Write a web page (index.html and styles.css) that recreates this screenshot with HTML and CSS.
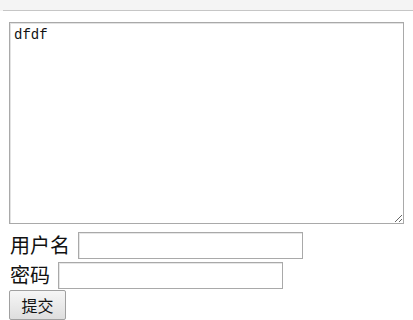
FILE: index.html
```html
<!DOCTYPE html>
<html lang="zh-CN">
<head>
  <meta charset="UTF-8">
  <title>提交</title>
  <link rel="stylesheet" href="styles.css">
</head>
<body>
  <div class="topbar"><div class="topbar-line"></div></div>
  <form class="login-form" action="#" method="post">
    <textarea class="note" name="content">dfdf</textarea>
    <div class="row">
      <label>用户名</label><input type="text" class="field" name="username">
    </div>
    <div class="row">
      <label>密码</label><input type="password" class="field" name="password">
    </div>
    <button type="submit" class="submit-btn">提交</button>
  </form>
</body>
</html>
```

FILE: styles.css
```css
body {
  margin: 0;
  background: #fff;
  font-family: "Noto Sans CJK SC", "Liberation Sans", sans-serif;
  color: #111;
}
.topbar {
  height: 11px;
  background: #f4f4f4;
  display: flex;
  flex-direction: column;
  justify-content: flex-end;
}
.topbar-line {
  height: 1px;
  margin-left: 3px;
  background: #c6c6c6;
}
.login-form {
  padding: 11px 0 0 9px;
}
.note {
  display: block;
  box-sizing: border-box;
  width: 395px;
  height: 202px;
  margin: 0;
  padding: 4px 4px;
  border: 1px solid #a9a9a9;
  box-shadow: inset 1px 1px 0 #e2e2e2;
  font-family: "Liberation Mono", "DejaVu Sans Mono", monospace;
  font-size: 14px;
  line-height: 17px;
  color: #111;
}
.row {
  display: flex;
  align-items: center;
  height: 30px;
}
.row:first-of-type {
  margin-top: 6px;
}
.row label {
  font-size: 20px;
  line-height: 30px;
  margin-left: 1px;
  margin-right: 8px;
}
.field {
  box-sizing: border-box;
  width: 225px;
  height: 27px;
  margin: 0;
  border: 1px solid #a9a9a9;
  box-shadow: inset 1px 1px 0 #e6e6e6;
  font-size: 14px;
}
.submit-btn {
  box-sizing: border-box;
  width: 57px;
  height: 30px;
  margin: 0;
  padding: 0;
  border: 1px solid #a0a0a0;
  border-radius: 2px;
  background: linear-gradient(#f6f6f6, #dedede);
  font-family: "Noto Sans CJK SC", sans-serif;
  font-size: 16px;
  color: #111;
}
```
